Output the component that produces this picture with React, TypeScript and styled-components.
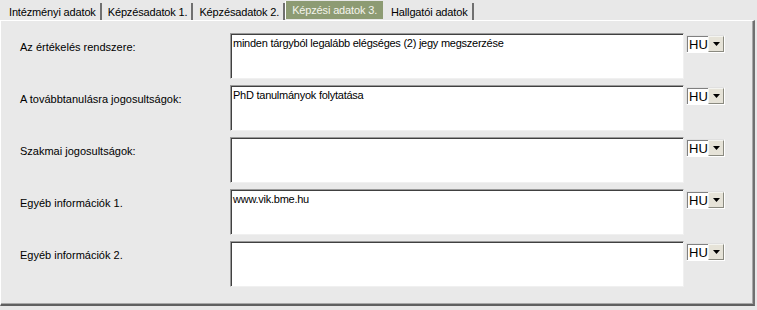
import React from "react";
import styled, { createGlobalStyle } from "styled-components";

const Global = createGlobalStyle`
  html, body { margin: 0; padding: 0; background: #e8e8e8; }
  body { font-family: "Liberation Sans", Arial, sans-serif; font-size: 11px; color: #000; }
`;

const Page = styled.div`
  width: 757px;
  height: 310px;
  background: #e8e8e8;
  display: flex;
  flex-direction: column;
`;

const TabBar = styled.div`
  display: flex;
  align-items: flex-end;
  height: 20px;
  padding-left: 3px;
  box-sizing: border-box;
`;

const Tab = styled.div<{ $active?: boolean }>`
  height: ${(p) => (p.$active ? "18px" : "17px")};
  margin-bottom: ${(p) => (p.$active ? "1px" : "0")};
  padding: 0 ${(p) => (p.$active ? "6px" : "4px")} 0 6px;
  display: flex;
  align-items: center;
  font-size: 11px;
  letter-spacing: -0.15px;
  color: ${(p) => (p.$active ? "#f4f4ec" : "#000")};
  background: ${(p) => (p.$active ? "#8d9b73" : "#e8e8e8")};
  border-right: 2px solid ${(p) => (p.$active ? "#e8e8e8" : "#707070")};
  border-left: ${(p) => (p.$active ? "1px solid #ffffff" : "none")};
  white-space: nowrap;
  box-sizing: border-box;
`;

const Panel = styled.div`
  width: 755px;
  height: 286px;
  box-sizing: border-box;
  border-top: 1px solid #ffffff;
  border-left: 1px solid #ffffff;
  border-right: 2px solid #707070;
  border-bottom: 2px solid #606060;
  box-shadow: inset -1px -1px 0 #a8a8a8, -1px 0 0 #a0a0a0;
  background: #e9e9e9;
  padding: 12px 0 0 19px;
  display: flex;
  flex-direction: column;
  gap: 6px;
`;

const Row = styled.div`
  display: grid;
  grid-template-columns: 208px 454px 39px;
  column-gap: 2px;
  height: 46px;
`;

const Label = styled.div`
  padding-top: 8px;
  font-size: 11px;
  line-height: 13px;
`;

const Field = styled.div`
  box-sizing: border-box;
  height: 46px;
  background: #fff;
  border-top: 1px solid #9a9a9a;
  border-left: 1px solid #9a9a9a;
  border-right: 1px solid #f0f0f0;
  border-bottom: 1px solid #f0f0f0;
  box-shadow: inset 1px 1px 0 #404040;
  padding: 3px 2px;
  font-size: 11px;
  letter-spacing: -0.25px;
  line-height: 13px;
`;

const Combo = styled.div`
  margin-top: 2px;
  height: 18px;
  box-sizing: border-box;
  display: flex;
  background: #fff;
  border-top: 1px solid #e0e0e0;
  border-left: 1px solid #e0e0e0;
  border-right: 1px solid #ffffff;
  border-bottom: 1px solid #ffffff;
  box-shadow: inset 1px 1px 0 #808080;
`;

const ComboText = styled.div`
  flex: 1;
  padding: 1px 0 0 2px;
  font-size: 13px;
  line-height: 15px;
`;

const ComboButton = styled.div`
  width: 16px;
  height: 16px;
  box-sizing: border-box;
  background: #e6e3d8;
  border-top: 1px solid #f4f4f0;
  border-left: 1px solid #f4f4f0;
  border-right: 1px solid #8a8a80;
  border-bottom: 1px solid #8a8a80;
  display: flex;
  align-items: center;
  justify-content: center;
`;

const rows = [
  { label: "Az értékelés rendszere:", value: "minden tárgyból legalább elégséges (2) jegy megszerzése" },
  { label: "A továbbtanulásra jogosultságok:", value: "PhD tanulmányok folytatása" },
  { label: "Szakmai jogosultságok:", value: "" },
  { label: "Egyéb információk 1.", value: "www.vik.bme.hu" },
  { label: "Egyéb információk 2.", value: "" },
];

const tabs = ["Intézményi adatok", "Képzésadatok 1.", "Képzésadatok 2.", "Képzési adatok 3.", "Hallgatói adatok"];

export default function App() {
  return (
    <Page>
      <Global />
      <TabBar>
        {tabs.map((t, i) => (
          <Tab key={t} $active={i === 3}>
            {t}
          </Tab>
        ))}
      </TabBar>
      <Panel>
        {rows.map((r) => (
          <Row key={r.label}>
            <Label>{r.label}</Label>
            <Field>{r.value}</Field>
            <Combo>
              <ComboText>HU</ComboText>
              <ComboButton>
                <svg width="7" height="4" viewBox="0 0 7 4">
                  <polygon points="0,0 7,0 3.5,4" fill="#000" />
                </svg>
              </ComboButton>
            </Combo>
          </Row>
        ))}
      </Panel>
    </Page>
  );
}
